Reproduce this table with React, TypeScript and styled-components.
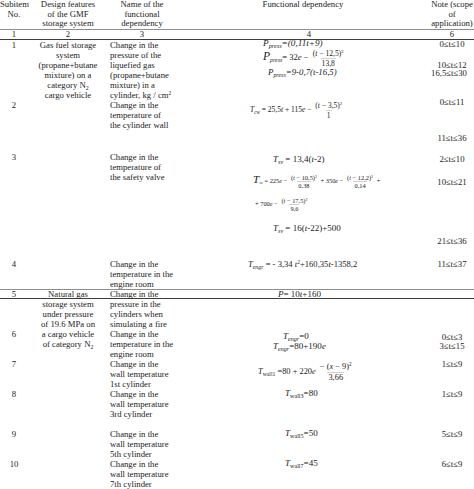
import React from 'react';
import styled, { createGlobalStyle } from 'styled-components';

const GlobalStyle = createGlobalStyle`
  html, body {
    margin: 0;
    padding: 0;
    background: #ffffff;
  }
  body {
    width: 474px;
    height: 489px;
    overflow: hidden;
    font-family: "Liberation Serif", "Times New Roman", serif;
    color: #222222;
  }
`;

const COLUMNS = '28px 80px 68px 254px 44px';

const Sheet = styled.div`
  width: 474px;
  font-size: 8.7px;
  line-height: 10px;
`;

const HeadRow = styled.div`
  display: grid;
  grid-template-columns: ${COLUMNS};
  height: 28.5px;
  line-height: 9.6px;
  border-bottom: 1.5px solid #8e8e8e;
`;

const HeadCell = styled.div`
  text-align: center;
  white-space: nowrap;
`;

const NumRow = styled.div`
  display: grid;
  grid-template-columns: ${COLUMNS};
  height: 9px;
  line-height: 9px;
  border-bottom: 1px solid #3c3c3c;
`;

const NumCell = styled.div<{ $shift?: number }>`
  text-align: center;
  padding-left: ${p => p.$shift ?? 0}px;
`;

const Group = styled.div<{ $rows: string; $rule?: boolean }>`
  display: grid;
  grid-template-columns: ${COLUMNS};
  grid-template-rows: ${p => p.$rows};
  ${p => (p.$rule ? 'border-bottom: 1.5px solid #8e8e8e;' : '')}
`;

const Band = styled.div`
  display: grid;
  grid-template-columns: ${COLUMNS};
  height: 8px;
  line-height: 8px;
  border-bottom: 1px solid #3c3c3c;
`;

const ItemNo = styled.div<{ $row?: number }>`
  grid-column: 1;
  grid-row: ${p => p.$row ?? 1};
  text-align: center;
`;

const Feature = styled.div<{ $span?: number }>`
  grid-column: 2;
  grid-row: 1 / span ${p => p.$span ?? 1};
  text-align: center;
  white-space: nowrap;
`;

const Name = styled.div<{ $row?: number }>`
  grid-column: 3;
  grid-row: ${p => p.$row ?? 1};
  padding-left: 2px;
  white-space: nowrap;
`;

const FormulaCell = styled.div<{ $row?: number }>`
  grid-column: 4;
  grid-row: ${p => p.$row ?? 1};
  display: grid;
  align-items: start;
  justify-items: start;
`;

const NoteCell = styled.div<{ $row?: number }>`
  grid-column: 5;
  grid-row: ${p => p.$row ?? 1};
  display: grid;
  align-items: start;
  justify-items: center;
`;

const Placed = styled.div<{ $top?: number; $left?: number; $h?: number }>`
  grid-area: 1 / 1;
  margin-top: ${p => p.$top ?? 0}px;
  margin-left: ${p => p.$left ?? 0}px;
  height: ${p => p.$h ?? 10}px;
  display: flex;
  align-items: center;
  white-space: nowrap;
`;

const Note = styled(Placed)`
  justify-self: center;
  font-size: 8.7px;
  line-height: 8px;
`;

const MathLine = styled.span<{ $size?: number }>`
  font-size: ${p => p.$size ?? 9}px;
  line-height: 1;
  white-space: nowrap;
`;

const V = styled.i`
  font-style: italic;
`;

const Big = styled.span<{ $scale?: number }>`
  font-size: ${p => p.$scale ?? 1.35}em;
`;

const Sub = styled.sub`
  font-size: 0.68em;
  vertical-align: -0.3em;
  line-height: 0;
`;

const Sup = styled.sup`
  font-size: 0.62em;
  vertical-align: 0.55em;
  line-height: 0;
`;

const Frac = styled.span<{ $lh?: number; $size?: number }>`
  display: inline-flex;
  flex-direction: column;
  align-items: center;
  vertical-align: middle;
  font-size: ${p => (p.$size ? `${p.$size}px` : '1em')};
  line-height: ${p => p.$lh ?? 9}px;
  margin: 0 1px;
`;

const Num = styled.span`
  padding: 0 1px;
`;

const Den = styled.span`
  padding: 0 1px;
  border-top: 0.6px solid #d0d0d0;
`;

const Lines = ({ items }: { items: React.ReactNode[] }) => (
  <>
    {items.map((item, i) => (
      <div key={i}>{item}</div>
    ))}
  </>
);

const N2 = (
  <>
    N<Sub>2</Sub>
  </>
);

const wallRows = [
  { no: '7', cyl: '1st cylinder' },
  { no: '8', cyl: '3rd cylinder' },
  { no: '9', cyl: '5th cylinder' },
  { no: '10', cyl: '7th cylinder' },
];

const App: React.FC = () => {
  return (
    <>
      <GlobalStyle />
      <Sheet>
        <HeadRow>
          <HeadCell>
            <Lines items={['Subitem', 'No.']} />
          </HeadCell>
          <HeadCell>
            <Lines items={['Design features', 'of the GMF', 'storage system']} />
          </HeadCell>
          <HeadCell>
            <Lines items={['Name of the', 'functional', 'dependency']} />
          </HeadCell>
          <HeadCell>Functional dependency</HeadCell>
          <HeadCell>
            <Lines items={['Note (scope', 'of', 'application)']} />
          </HeadCell>
        </HeadRow>

        <NumRow>
          <NumCell>1</NumCell>
          <NumCell>2</NumCell>
          <NumCell>3</NumCell>
          <NumCell $shift={12}>4</NumCell>
          <NumCell>6</NumCell>
        </NumRow>

        {/* gas fuel storage system */}
        <Group $rows="60px 52px 107.5px 30px" $rule>
          <ItemNo $row={1}>1</ItemNo>
          <Feature $span={4}>
            <Lines
              items={[
                'Gas fuel storage',
                'system',
                '(propane+butane',
                'mixture) on a',
                <>category {N2}</>,
                'cargo vehicle',
              ]}
            />
          </Feature>
          <Name $row={1}>
            <Lines
              items={[
                'Change in the',
                'pressure of the',
                'liquefied gas',
                '(propane+butane',
                'mixture) in a',
                <>
                  cylinder, kg / cm<Sup>2</Sup>
                </>,
              ]}
            />
          </Name>
          <FormulaCell $row={1}>
            <Placed $top={-1} $left={87}>
              <MathLine $size={9.2}>
                <V>
                  P<Sub>press</Sub>=(0,11t+9)
                </V>
              </MathLine>
            </Placed>
            <Placed $top={6.5} $left={87} $h={24}>
              <MathLine $size={8.6}>
                <Big>
                  <V>P</V>
                </Big>
                <Sub>
                  <V>press</V>
                </Sub>
                = 32<V>e</V> −{' '}
                <Frac $lh={9} $size={7.6}>
                  <Num>
                    (<V>t</V> − 12,5)<Sup>2</Sup>
                  </Num>
                  <Den>13,8</Den>
                </Frac>
              </MathLine>
            </Placed>
            <Placed $top={27.5} $left={92}>
              <MathLine $size={8.8}>
                <V>
                  P<Sub>press</Sub>=9-0,7(t-16,5)
                </V>
              </MathLine>
            </Placed>
          </FormulaCell>
          <NoteCell $row={1}>
            <Note $top={-0.5}>0≤t≤10</Note>
            <Note $top={20}>10≤t≤12</Note>
            <Note $top={28.5} $left={-6}>
              16,5≤t≤30
            </Note>
          </NoteCell>

          <ItemNo $row={2}>2</ItemNo>
          <Name $row={2}>
            <Lines items={['Change in the', 'temperature of', 'the cylinder wall']} />
          </Name>
          <FormulaCell $row={2}>
            <Placed $top={-1} $left={74} $h={24}>
              <MathLine $size={7.5}>
                <V>T</V>
                <Sub>
                  <V>cw</V>
                </Sub>{' '}
                = 25,5<V>t</V> + 115<V>e</V> −{' '}
                <Frac $lh={9}>
                  <Num>
                    (<V>t</V> − 3,5)<Sup>2</Sup>
                  </Num>
                  <Den>1</Den>
                </Frac>
              </MathLine>
            </Placed>
          </FormulaCell>
          <NoteCell $row={2}>
            <Note $top={-2.5}>0≤t≤11</Note>
            <Note $top={33}>11≤t≤36</Note>
          </NoteCell>

          <ItemNo $row={3}>3</ItemNo>
          <Name $row={3}>
            <Lines items={['Change in the', 'temperature of', 'the safety valve']} />
          </Name>
          <FormulaCell $row={3}>
            <Placed $top={2.5} $left={97}>
              <MathLine $size={9}>
                <V>
                  T<Sub>sv</Sub>
                </V>{' '}
                = 13,4(<V>t</V>-2)
              </MathLine>
            </Placed>
            <Placed $top={18} $left={77} $h={24}>
              <MathLine $size={6.4}>
                <Big $scale={1.75}>
                  <V>T</V>
                </Big>
                <Sub>
                  <V>sv</V>
                </Sub>{' '}
                = 225<V>e</V> −{' '}
                <Frac $lh={7}>
                  <Num>
                    (<V>t</V> − 10,5)<Sup>2</Sup>
                  </Num>
                  <Den>0,38</Den>
                </Frac>{' '}
                + 350<V>e</V> −{' '}
                <Frac $lh={7}>
                  <Num>
                    (<V>t</V> − 12,2)<Sup>2</Sup>
                  </Num>
                  <Den>0,14</Den>
                </Frac>{' '}
                +
              </MathLine>
            </Placed>
            <Placed $top={40.5} $left={79} $h={24}>
              <MathLine $size={6.4}>
                + 700<V>e</V> −{' '}
                <Frac $lh={7}>
                  <Num>
                    (<V>t</V> − 17,5)<Sup>2</Sup>
                  </Num>
                  <Den>9,6</Den>
                </Frac>
              </MathLine>
            </Placed>
            <Placed $top={72} $left={97}>
              <MathLine $size={9}>
                <V>
                  T<Sub>sv</Sub>
                </V>{' '}
                = 16(<V>t</V>-22)+500
              </MathLine>
            </Placed>
          </FormulaCell>
          <NoteCell $row={3}>
            <Note $top={2.5}>2≤t≤10</Note>
            <Note $top={25.5}>10≤t≤21</Note>
            <Note $top={84}>21≤t≤36</Note>
          </NoteCell>

          <ItemNo $row={4}>4</ItemNo>
          <Name $row={4}>
            <Lines items={['Change in the', 'temperature in the', 'engine room']} />
          </Name>
          <FormulaCell $row={4}>
            <Placed $top={0} $left={72}>
              <MathLine $size={8.6}>
                <V>
                  T<Sub>engr</Sub>
                </V>{' '}
                = - 3,34 <V>t</V>
                <Sup>2</Sup>+160,35<V>t</V>-1358,2
              </MathLine>
            </Placed>
          </FormulaCell>
          <NoteCell $row={4}>
            <Note $top={0}>11≤t≤37</Note>
          </NoteCell>
        </Group>

        {/* natural gas storage system */}
        <Band>
          <ItemNo>5</ItemNo>
          <Feature>Natural gas</Feature>
          <Name>Change in the</Name>
          <FormulaCell>
            <Placed $left={102} $h={8}>
              <MathLine $size={9}>
                <V>P</V>= 10<V>t</V>+160
              </MathLine>
            </Placed>
          </FormulaCell>
          <NoteCell />
        </Band>

        <Group $rows="30px 30px 30px 40px 30px 30px">
          <Feature $span={2}>
            <Lines
              items={[
                'storage system',
                'under pressure',
                'of 19.6 MPa on',
                'a cargo vehicle',
                <>of category {N2}</>,
              ]}
            />
          </Feature>
          <Name $row={1}>
            <Lines items={['pressure in the', 'cylinders when', 'simulating a fire']} />
          </Name>

          <ItemNo $row={2}>6</ItemNo>
          <Name $row={2}>
            <Lines items={['Change in the', 'temperature in the', 'engine room']} />
          </Name>
          <FormulaCell $row={2}>
            <Placed $top={2.5} $left={107}>
              <MathLine $size={9}>
                <V>
                  T<Sub>engr</Sub>
                </V>
                =0
              </MathLine>
            </Placed>
            <Placed $top={12} $left={97}>
              <MathLine $size={9}>
                <V>
                  T<Sub>engr</Sub>
                </V>
                =80+190<V>e</V>
              </MathLine>
            </Placed>
          </FormulaCell>
          <NoteCell $row={2}>
            <Note $top={2.5}>0≤t≤3</Note>
            <Note $top={12}>3≤t≤15</Note>
          </NoteCell>

          {wallRows.map((w, i) => (
            <React.Fragment key={w.no}>
              <ItemNo $row={i + 3}>{w.no}</ItemNo>
              <Name $row={i + 3}>
                <Lines items={['Change in the', 'wall temperature', w.cyl]} />
              </Name>
            </React.Fragment>
          ))}

          <FormulaCell $row={3}>
            <Placed $top={1.5} $left={82} $h={24}>
              <MathLine $size={8.4}>
                <V>T</V>
                <Sub>wall1</Sub> =80 + 220<V>e</V>{' '}
                <Frac $lh={10}>
                  <Num>
                    − (<V>x</V> − 9)<Sup>2</Sup>
                  </Num>
                  <Den>3,66</Den>
                </Frac>
              </MathLine>
            </Placed>
          </FormulaCell>
          <NoteCell $row={3}>
            <Note $top={-0.5}>1≤t≤9</Note>
          </NoteCell>

          {[
            { row: 4, sub: 'wall3', val: '80', note: '1≤t≤9' },
            { row: 5, sub: 'wall5', val: '50', note: '5≤t≤9' },
            { row: 6, sub: 'wall7', val: '45', note: '6≤t≤9' },
          ].map(f => (
            <React.Fragment key={f.sub}>
              <FormulaCell $row={f.row}>
                <Placed $top={-0.5} $left={109}>
                  <MathLine $size={9}>
                    <V>T</V>
                    <Sub>{f.sub}</Sub>={f.val}
                  </MathLine>
                </Placed>
              </FormulaCell>
              <NoteCell $row={f.row}>
                <Note $top={-0.5}>{f.note}</Note>
              </NoteCell>
            </React.Fragment>
          ))}
        </Group>
      </Sheet>
    </>
  );
};

export default App;
